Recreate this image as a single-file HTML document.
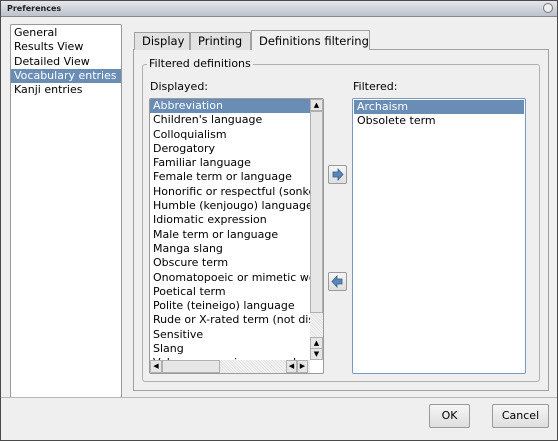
<!DOCTYPE html>
<html><head><style>
*{box-sizing:border-box;margin:0;padding:0}
body{width:558px;height:441px;overflow:hidden;background:#efefef;font-family:"DejaVu Sans","Liberation Sans",sans-serif;font-size:11px;color:#000;position:relative}
.a{position:absolute}
.title{left:0;top:0;width:558px;height:17px;background:linear-gradient(#e4e7ec,#bcc2cb);border:1px solid #4a4a4a;border-bottom:1px solid #888;font-weight:bold;font-size:8px;padding:3px 0 0 6px;color:#222}
.frame{left:0;top:0;width:558px;height:441px;border:1px solid #4a4a4a;border-top:none}
.list{background:#fff;border:1px solid #9a9a9a;border-radius:2px}
.it{height:14.3px;line-height:14.3px;padding-left:3px;white-space:nowrap;overflow:hidden}
.sel{background:#6a8db5;color:#fff}
.tab{border:1px solid #a0a0a0;border-bottom:none;background:#e2e2e2;padding-left:7px;line-height:17px;font-size:11.5px}
.btn{border:1px solid #9a9a9a;border-radius:2px;background:linear-gradient(#f6f6f6,#dedede);text-align:center}
.sb{background:repeating-linear-gradient(45deg,#f4f4f4 0 1px,#e4e4e4 1px 2px)}
.sbt{background:#e6e6e6;border:1px solid #b0b0b0}
</style></head><body>
<div class="a title">Preferences</div>
<div class="a" style="right:5px;top:3px;width:10px;height:10px;border-radius:50%;border:1px solid #777;background:#eee"></div>

<div class="a list" style="left:10px;top:24px;width:112px;height:374px;padding-top:1px">
<div class="it">General</div><div class="it">Results View</div><div class="it">Detailed View</div><div class="it sel">Vocabulary entries</div><div class="it">Kanji entries</div>
</div>

<div class="a" style="left:133px;top:49px;width:416px;height:342px;border:1px solid #a0a0a0"></div>
<div class="a tab" style="left:134px;top:32px;width:56px;height:18px">Display</div>
<div class="a tab" style="left:190px;top:32px;width:61px;height:18px">Printing</div>
<div class="a tab" style="left:251px;top:30px;width:119px;height:20px;background:#efefef;line-height:20px">Definitions filtering</div>

<div class="a" style="left:142px;top:64px;width:398px;height:318px;border:1px solid #b0b0b0;border-radius:3px"></div>
<div class="a" style="left:147px;top:57px;background:#efefef;padding:0 2px;line-height:14px">Filtered definitions</div>

<div class="a" style="left:150px;top:80px">Displayed:</div>
<div class="a" style="left:353px;top:80px">Filtered:</div>

<div class="a list" style="left:149px;top:98px;width:175px;height:276px;overflow:hidden">
<div style="width:160px;height:261px;overflow:hidden">
<div class="it sel">Abbreviation</div><div class="it">Children's language</div><div class="it">Colloquialism</div><div class="it">Derogatory</div><div class="it">Familiar language</div><div class="it">Female term or language</div><div class="it">Honorific or respectful (sonkeigo)</div><div class="it">Humble (kenjougo) language</div><div class="it">Idiomatic expression</div><div class="it">Male term or language</div><div class="it">Manga slang</div><div class="it">Obscure term</div><div class="it">Onomatopoeic or mimetic word</div><div class="it">Poetical term</div><div class="it">Polite (teineigo) language</div><div class="it">Rude or X-rated term (not displayed)</div><div class="it">Sensitive</div><div class="it">Slang</div><div class="it">Vulgar expression or word</div>
</div>
<div class="a sb" style="left:160px;top:0;width:13px;height:261px"></div>
<div class="a sbt" style="left:160px;top:0;width:13px;height:12px;font-size:7px;text-align:center;line-height:10px">▲</div>
<div class="a sbt" style="left:160px;top:12px;width:13px;height:202px"></div>
<div class="a sbt" style="left:160px;top:238px;width:13px;height:12px;font-size:7px;text-align:center;line-height:10px">▲</div>
<div class="a sbt" style="left:160px;top:249px;width:13px;height:12px;font-size:7px;text-align:center;line-height:10px">▼</div>
<div class="a sb" style="left:0;top:261px;width:160px;height:13px"></div>
<div class="a sbt" style="left:0;top:261px;width:12px;height:13px;font-size:7px;text-align:center;line-height:11px">◀</div>
<div class="a sbt" style="left:12px;top:261px;width:58px;height:13px"></div>
<div class="a sbt" style="left:136px;top:261px;width:11px;height:13px;font-size:7px;text-align:center;line-height:11px">◀</div>
<div class="a sbt" style="left:147px;top:261px;width:11px;height:13px;font-size:7px;text-align:center;line-height:11px">▶</div>
</div>

<div class="a btn" style="left:328px;top:165px;width:19px;height:19px"><svg width="17" height="17"><path d="M4 6h5V3l5 5.5-5 5.5v-3H4z" fill="#5d86b8" stroke="#2f5a8c" stroke-width="0.8"/></svg></div>
<div class="a btn" style="left:328px;top:272px;width:19px;height:19px"><svg width="17" height="17"><path d="M13 6H8V3L3 8.5 8 14v-3h5z" fill="#5d86b8" stroke="#2f5a8c" stroke-width="0.8"/></svg></div>

<div class="a list" style="left:352px;top:98px;width:174px;height:276px;border-color:#7c9ac0;padding:1px">
<div class="it sel">Archaism</div><div class="it">Obsolete term</div>
</div>

<div class="a" style="left:0;top:397px;width:558px;border-top:1px solid #b8b8b8"></div>
<div class="a btn" style="left:429px;top:404px;width:41px;height:24px;line-height:22px">OK</div>
<div class="a btn" style="left:492px;top:404px;width:57px;height:24px;line-height:22px">Cancel</div>
<div class="a frame"></div>
</body></html>
